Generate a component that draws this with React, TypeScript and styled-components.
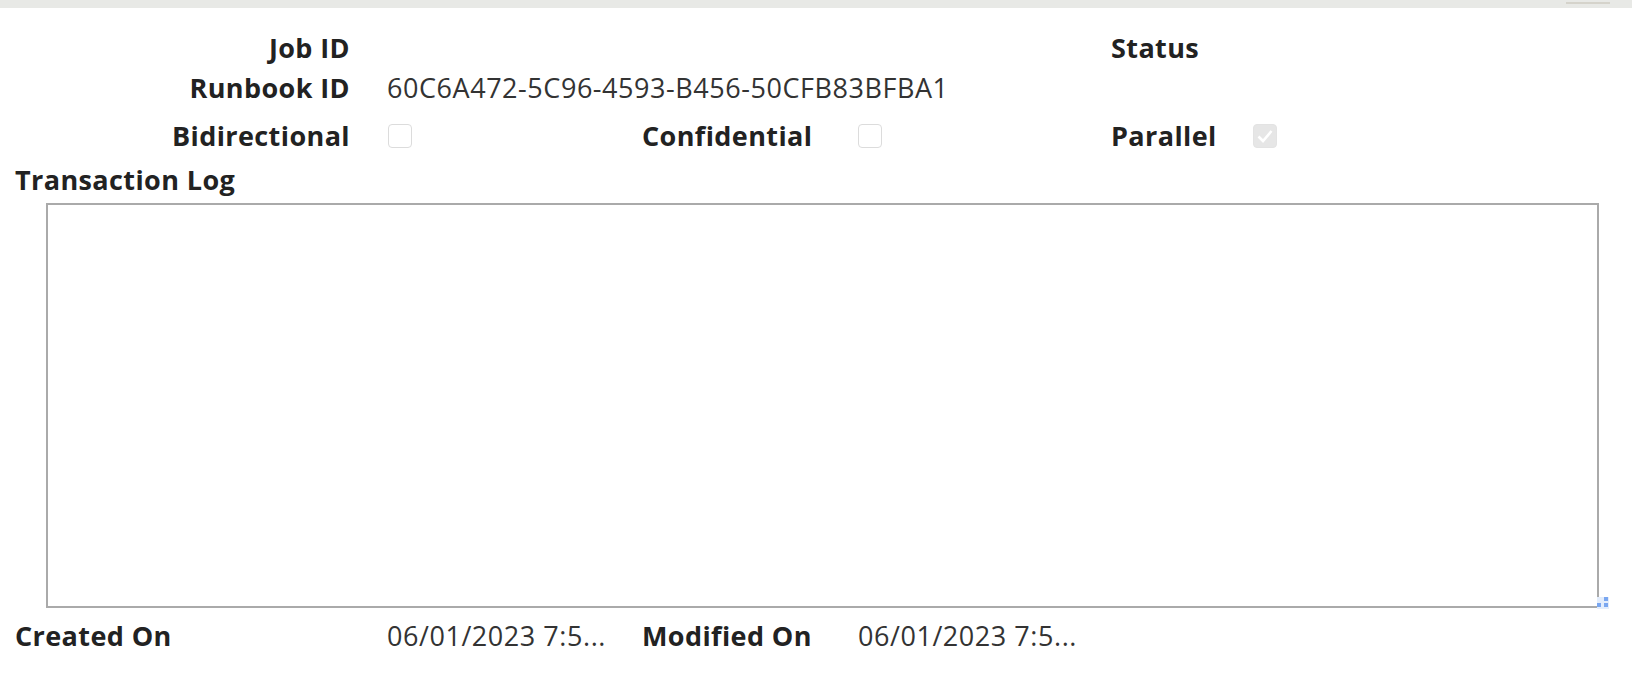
import styled, { createGlobalStyle } from "styled-components";

const GlobalStyle = createGlobalStyle`
  html, body {
    margin: 0;
    padding: 0;
    background: #ffffff;
  }
  body {
    font-family: "Open Sans", "Noto Sans", Arial, sans-serif;
    color: #222222;
  }
`;

const TopBar = styled.div`
  height: 8px;
  background: #e8e9e6;
  display: flex;
  justify-content: flex-end;
  align-items: flex-start;
  padding: 2px 22px 0 0;
  box-sizing: border-box;
`;

const Thumb = styled.div`
  width: 44px;
  height: 2px;
  background: #d5d3cb;
`;

const Form = styled.div`
  padding: 20px 32px 0 0;
  display: grid;
  grid-template-columns: 350px 292px 216px 253px 142px 1fr;
`;

const Label = styled.div<{ $align?: "left" | "right"; $height?: number }>`
  font-size: 27px;
  font-weight: 700;
  letter-spacing: 0.4px;
  line-height: ${(p) => p.$height ?? 40}px;
  height: ${(p) => p.$height ?? 40}px;
  color: #222222;
  white-space: nowrap;
  text-align: ${(p) => p.$align ?? "left"};
`;

const FieldLabel = styled(Label)`
  padding-left: 15px;
`;

const Value = styled.div<{ $pad?: number; $height?: number }>`
  font-size: 27px;
  font-weight: 400;
  letter-spacing: 0.55px;
  line-height: ${(p) => p.$height ?? 40}px;
  height: ${(p) => p.$height ?? 40}px;
  color: #333333;
  white-space: nowrap;
  padding-left: ${(p) => p.$pad ?? 0}px;
  display: flex;
  align-items: center;
`;

const Empty = styled.div``;

const RowGap = styled.div<{ $h: number }>`
  grid-column: 1 / -1;
  height: ${(p) => p.$h}px;
`;

const Check = styled.span<{ $disabled?: boolean }>`
  width: 24px;
  height: 24px;
  box-sizing: border-box;
  border: 1px solid ${(p) => (p.$disabled ? "#e3e3e3" : "#dcdcdc")};
  border-radius: 4px;
  background: ${(p) => (p.$disabled ? "#e6e6e6" : "#ffffff")};
  display: flex;
  align-items: center;
  justify-content: center;
`;

const Wide = styled.div`
  grid-column: 1 / -1;
`;

const LogBox = styled.div`
  grid-column: 1 / -1;
  margin: 3px 1px 0 46px;
  height: 405px;
  border: 2px solid #aaaaaa;
  box-sizing: border-box;
  position: relative;
`;

const Grip = styled.svg`
  position: absolute;
  right: -12px;
  bottom: -3px;
`;

function CheckBox({ checked, disabled }: { checked?: boolean; disabled?: boolean }) {
  return (
    <Check $disabled={disabled}>
      {checked && (
        <svg width="18" height="18" viewBox="0 0 18 18">
          <path d="M2.5 9.5 L7 14 L15.5 4" fill="none" stroke="#ffffff" strokeWidth="2.6" />
        </svg>
      )}
    </Check>
  );
}

export default function App() {
  return (
    <>
      <GlobalStyle />
      <TopBar>
        <Thumb />
      </TopBar>
      <Form>
        <Label $align="right">Job ID</Label>
        <Empty />
        <Empty />
        <Empty />
        <Label>Status</Label>
        <Empty />

        <Label $align="right">Runbook ID</Label>
        <Value $pad={37}>60C6A472-5C96-4593-B456-50CFB83BFBA1</Value>
        <Empty />
        <Empty />
        <Empty />
        <Empty />

        <RowGap $h={4} />

        <Label $align="right" $height={48}>Bidirectional</Label>
        <Value $pad={38} $height={48}>
          <CheckBox />
        </Value>
        <Label $height={48}>Confidential</Label>
        <Value $height={48}>
          <CheckBox />
        </Value>
        <Label $height={48}>Parallel</Label>
        <Value $height={48}>
          <CheckBox checked disabled />
        </Value>

        <Wide>
          <FieldLabel>Transaction Log</FieldLabel>
        </Wide>

        <LogBox>
          <Grip width="12" height="12" viewBox="0 0 12 12">
            <rect x="0" y="0" width="12" height="12" fill="#e3edfc" />
            <rect x="7" y="0" width="4" height="4" fill="#7aa7f0" />
            <rect x="0" y="6" width="4" height="4" fill="#7aa7f0" />
            <rect x="7" y="6" width="4" height="4" fill="#7aa7f0" />
          </Grip>
        </LogBox>

        <RowGap $h={8} />

        <FieldLabel>Created On</FieldLabel>
        <Value $pad={37}>06/01/2023 7:5...</Value>
        <Label>Modified On</Label>
        <Value>06/01/2023 7:5...</Value>
        <Empty />
        <Empty />
      </Form>
    </>
  );
}
